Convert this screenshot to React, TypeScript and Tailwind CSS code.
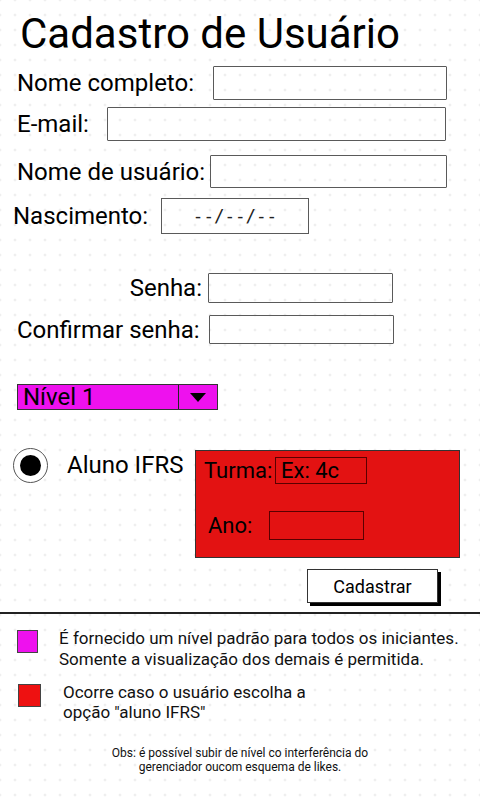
import React from "react";

const font = { fontFamily: "Roboto, 'Noto Sans', sans-serif" };

function Box({ className }: { className: string }) {
  return <div className={`border-[1.5px] border-[#5a5a5a] rounded-[1px] ${className}`} />;
}

function Row({
  top,
  h,
  labelW,
  label,
  inputW,
  right,
  labelPl = "pl-[17px]",
}: {
  top: string;
  h: string;
  labelW: string;
  label: string;
  inputW: string;
  right?: boolean;
  labelPl?: string;
}) {
  return (
    <div className={`flex items-center ${top} ${h}`}>
      <div className={`${labelW} ${labelPl} ${right ? "text-right pr-[6px]" : ""} whitespace-nowrap text-[24px] leading-none text-black`}>
        {label}
      </div>
      <Box className={`${inputW} h-full`} />
    </div>
  );
}

export default function App() {
  return (
    <div
      style={font}
      className="relative w-[480px] h-[800px] overflow-hidden bg-white bg-[radial-gradient(circle,#dedede_0.9px,transparent_1.1px)] bg-[length:15px_15px] bg-[position:7.5px_7.5px] text-black"
    >
      <h1 className="pl-[20px] pt-[13px] text-[42px] leading-[42px] font-normal">Cadastro de Usuário</h1>

      <Row top="mt-[11px]" h="h-[34px]" labelW="w-[213px]" label="Nome completo:" inputW="w-[234px]" />
      <Row top="mt-[7px]" h="h-[34px]" labelW="w-[107px]" label="E-mail:" inputW="w-[339px]" />
      <Row top="mt-[14px]" h="h-[33px]" labelW="w-[210px]" label="Nome de usuário:" inputW="w-[237px]" />

      <div className="mt-[10px] flex h-[36px] items-center">
        <div className="w-[161px] pl-[13px] text-[24px] leading-none">Nascimento:</div>
        <div
          className="flex h-full w-[148px] items-center justify-center border-[1.5px] border-[#5a5a5a] text-[17.5px] text-[#222]"
          style={{ fontFamily: "'DejaVu Sans Mono', monospace" }}
        >
          --/--/--
        </div>
      </div>

      <Row top="mt-[39px]" h="h-[30px]" labelW="w-[208px]" label="Senha:" inputW="w-[185px]" right labelPl="pl-0" />
      <Row top="mt-[12px]" h="h-[29px]" labelW="w-[209px]" label="Confirmar senha:" inputW="w-[185px]" />

      <div className="ml-[17px] mt-[40px] flex h-[26px] w-[201px] border border-[#333] bg-[#ee11ee]">
        <div className="flex flex-1 items-center pl-[5px] text-[24px] leading-none">Nível 1</div>
        <div className="flex w-[39px] items-center justify-center border-l-[1.5px] border-[#222]">
          <div className="h-0 w-0 border-x-[8px] border-t-[9px] border-x-transparent border-t-black" />
        </div>
      </div>

      <div className="mt-[38px] flex">
        <div className="ml-[13px] flex h-[35px] w-[35px] items-center justify-center rounded-full border-[1.5px] border-[#555] bg-white">
          <div className="h-[21px] w-[21px] rounded-full bg-black" />
        </div>
        <div className="ml-[19px] mt-[5px] w-[128px] whitespace-nowrap text-[24px] leading-none">Aluno IFRS</div>
        <div className="mt-[2px] h-[108px] w-[265px] border border-[#333] bg-[#e31212]">
          <div className="mt-[6px] flex h-[27px] items-center">
            <div className="w-[79px] pl-[8px] text-[22px] leading-none">Turma:</div>
            <div className="flex h-full w-[92px] items-center border border-[#5a0000] pl-[5px] text-[22px] leading-none">Ex: 4c</div>
          </div>
          <div className="mt-[27px] flex h-[29px] items-center">
            <div className="w-[73px] pl-[12px] text-[22px] leading-none">Ano:</div>
            <div className="h-full w-[95px] border border-[#5a0000]" />
          </div>
        </div>
      </div>

      <div className="ml-[307px] mt-[11px] flex h-[34px] w-[131px] items-center justify-center border border-[#333] bg-white text-[18px] shadow-[3px_3px_0_#000]">
        Cadastrar
      </div>

      <div className="mt-[9px] h-[1.5px] w-full bg-[#222]" />

      <div className="mt-[14px] flex">
        <div className="ml-[17px] mt-[2px] h-[23px] w-[21px] border border-[#444] bg-[#ee11ee]" />
        <div className="ml-[21px] whitespace-nowrap text-[17px] leading-[21px] text-[#111]">
          É fornecido um nível padrão para todos os iniciantes.
          <br />
          Somente a visualização dos demais é permitida.
        </div>
      </div>

      <div className="mt-[12px] flex">
        <div className="ml-[18px] mt-[2px] h-[23px] w-[23px] border border-[#444] bg-[#ee1111]" />
        <div className="ml-[22px] text-[17px] leading-[20px] text-[#111]">
          Ocorre caso o usuário escolha a
          <br />
          opção "aluno IFRS"
        </div>
      </div>

      <div className="mt-[24px] text-center text-[12px] leading-[14px] text-[#111]">
        Obs: é possível subir de nível co interferência do
        <br />
        gerenciador oucom esquema de likes.
      </div>
    </div>
  );
}
